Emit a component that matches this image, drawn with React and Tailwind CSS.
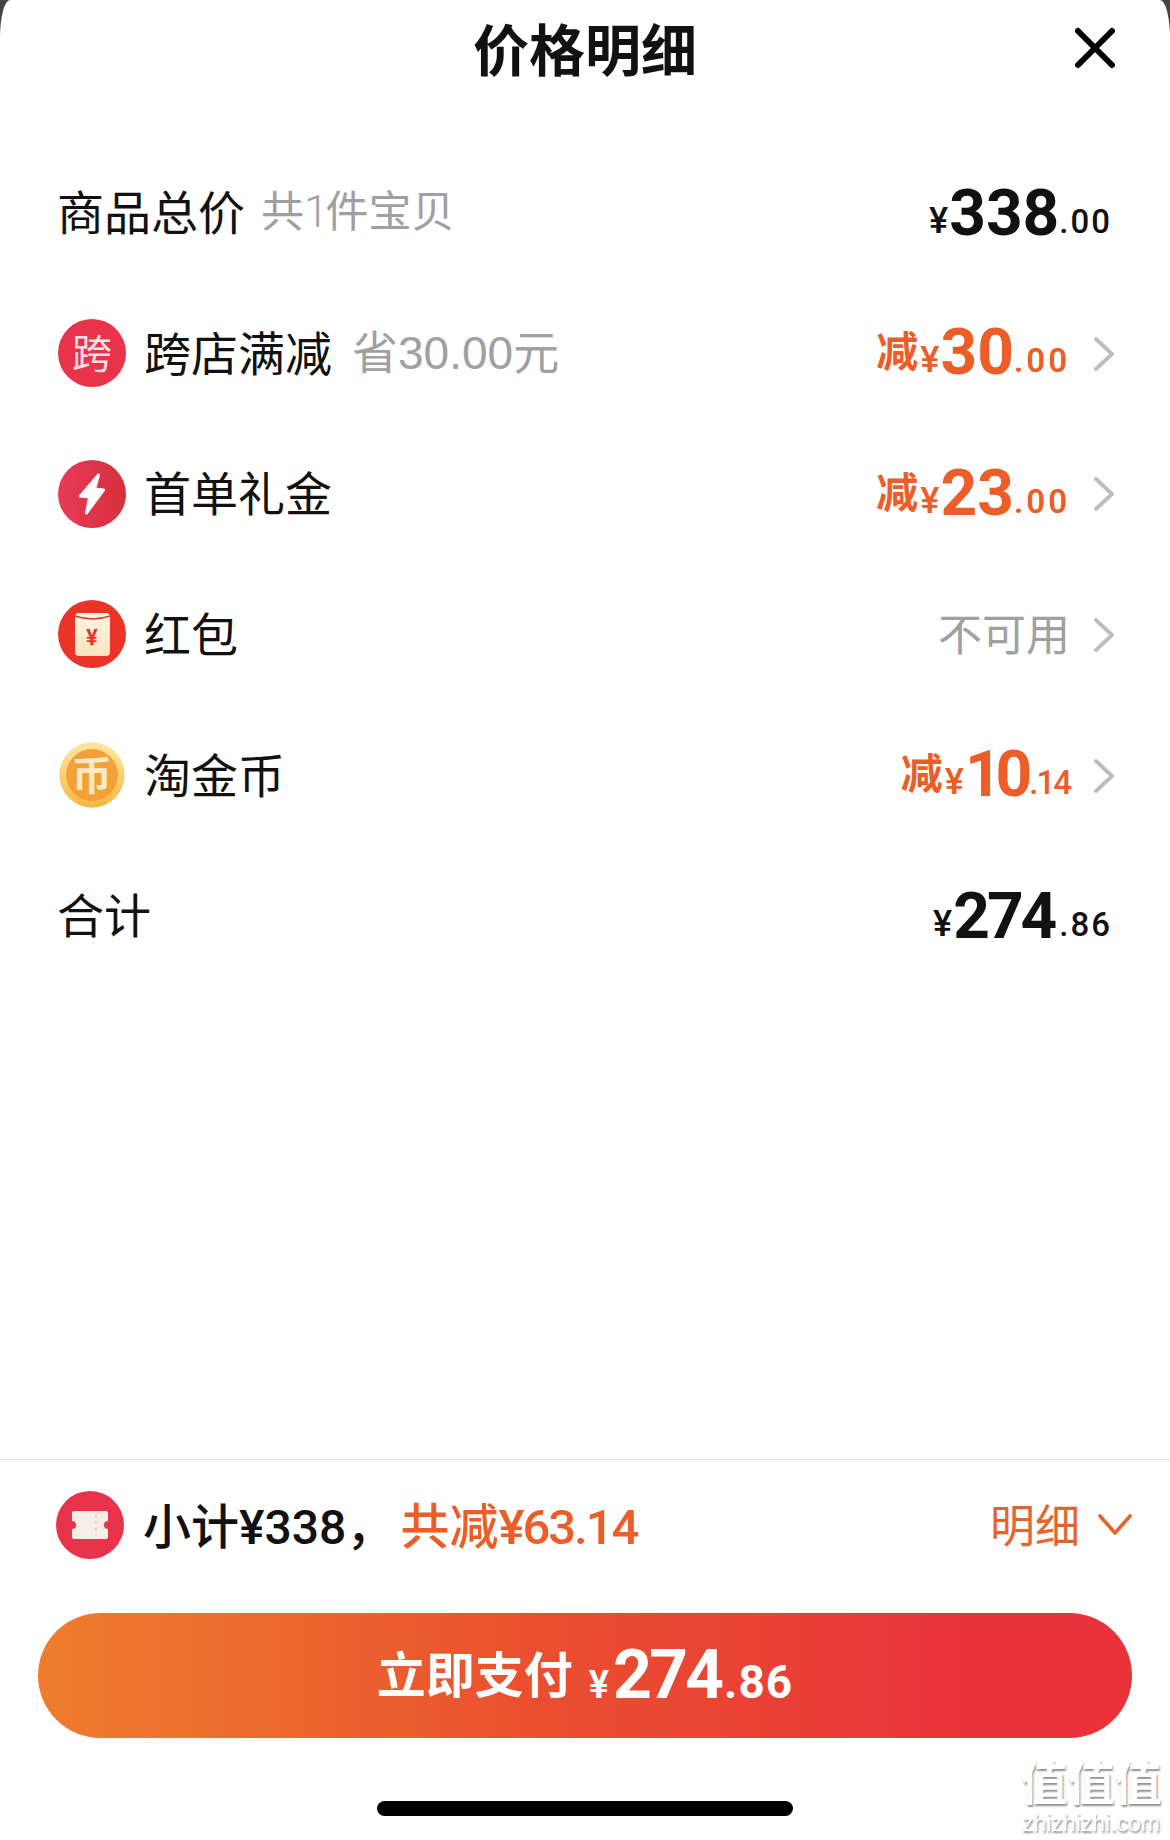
import React from "react";

function Chevron() {
  return (
    <svg width="20" height="34" viewBox="0 0 20 34" fill="none" className="ml-[24px] mt-[1px] shrink-0">
      <path d="M2 2 L18 17 L2 32" stroke="#bdbdbd" strokeWidth="3.8" strokeLinecap="round" strokeLinejoin="round" />
    </svg>
  );
}

function Amount({ prefix, int, dec, color, intClass = "tracking-[0px]", decClass = "tracking-[2px]" }) {
  return (
    <span className={`font-['Roboto',sans-serif] whitespace-nowrap leading-none ${color}`}>
      {prefix && <span className="font-['Noto_Sans_CJK_SC',sans-serif] text-[42px] font-bold align-[5px]">{prefix}</span>}
      <span className="text-[36px] font-medium ml-[2px] mr-[1px]">¥</span>
      <span className={`text-[64px] font-bold align-[-2px] ${intClass}`}>{int}</span>
      <span className={`text-[33px] font-medium ${decClass}`}>{dec}</span>
    </span>
  );
}

function IconCircle({ children, className }) {
  return <div className={`w-[68px] h-[68px] rounded-full flex items-center justify-center shrink-0 ${className}`}>{children}</div>;
}

function Row({ icon, label, sub, right, chevron }) {
  return (
    <div className={`flex items-center h-[140.7px] ${icon ? "pl-[58px]" : "pl-[57px]"} ${chevron ? "pr-[56px]" : "pr-[58px]"}`}>
      {icon && <div className="mr-[18px]">{icon}</div>}
      <span className="text-[47px] leading-none text-[#111] pb-[6px]">{label}</span>
      {sub}
      <div className="ml-auto flex items-center">
        {right}
        {chevron && <Chevron />}
      </div>
    </div>
  );
}

export default function App() {
  return (
    <div className="relative w-[1170px] h-[1840px] bg-[#444444] overflow-hidden font-['Noto_Sans_CJK_SC',sans-serif]">
      <div className="w-full h-full bg-white rounded-tl-[10px_38px] rounded-tr-[10px_38px] flex flex-col">
        <div className="relative h-[100px] shrink-0 flex items-center justify-center">
          <span className="text-[56px] leading-none font-bold text-[#111] pb-[6px]">价格明细</span>
          <svg width="42" height="42" viewBox="0 0 42 42" fill="none" className="absolute left-[1074px] top-[27px]">
            <path d="M4 4 L38 38 M38 4 L4 38" stroke="#000" strokeWidth="6" strokeLinecap="round" />
          </svg>
        </div>
        <div className="h-[42px] shrink-0" />
        <Row
          label="商品总价"
          sub={
            <span className="text-[43px] leading-none text-[#a0a0a0] ml-[16px] pb-[3px] whitespace-nowrap">
              共<span className="font-['Roboto',sans-serif] font-light text-[44px] tracking-[-6px]">1</span>
              <span className="ml-[3px]">件宝贝</span>
            </span>
          }
          right={<Amount int="338" dec=".00" color="text-[#111] pt-[3px]" intClass="tracking-[0px]" />}
        />
        <Row
          icon={
            <IconCircle className="bg-[#e8334a]">
              <span className="text-[40px] leading-none text-[#fbe3e3] pb-[4px]">跨</span>
            </IconCircle>
          }
          label="跨店满减"
          sub={
            <span className="text-[46px] leading-none text-[#a0a0a0] ml-[20px] pb-[4px]">
              省<span className="font-['Liberation_Sans',sans-serif]">30.00</span>元
            </span>
          }
          chevron
          right={<Amount prefix="减" int="30" dec=".00" color="text-[#ec5d28]" decClass="tracking-[3px] font-semibold" />}
        />
        <Row
          icon={
            <IconCircle className="bg-gradient-to-r from-[#e93a58] to-[#d62f3a]">
              <svg width="28" height="44" viewBox="0 0 27 44">
                <path d="M20 3 L2 24 L11 25 L8 41 L25 18 L16 17 Z" fill="#fff" stroke="#fff" strokeWidth="3" strokeLinejoin="round" />
              </svg>
            </IconCircle>
          }
          label="首单礼金"
          chevron
          right={<Amount prefix="减" int="23" dec=".00" color="text-[#ec5d28]" decClass="tracking-[3px] font-semibold" />}
        />
        <Row
          icon={
            <IconCircle className="bg-[#ea3428]">
              <div className="w-[35px] h-[43px] rounded-[4px] bg-gradient-to-b from-[#fff5e2] to-[#fce4c0] flex items-center justify-center relative overflow-hidden">
                <svg width="35" height="10" viewBox="0 0 35 10" className="absolute top-0 left-0">
                  <path d="M0 3 Q17.5 9 35 3" stroke="#ea3428" strokeWidth="1.4" fill="none" />
                </svg>
                <span className="font-['Roboto',sans-serif] text-[22px] leading-none font-bold text-[#e8362c] mt-[7px]">¥</span>
              </div>
            </IconCircle>
          }
          label="红包"
          chevron
          right={<span className="text-[44px] leading-none text-[#a0a0a0] pb-[5px]">不可用</span>}
        />
        <Row
          icon={
            <IconCircle className="bg-gradient-to-b from-[#fbe7a0] to-[#f6b83e] p-[7px] scale-[0.96]">
              <div className="w-full h-full rounded-full bg-[#f1a136] flex items-center justify-center">
                <span className="text-[42px] leading-none font-bold text-[#fde9c8] pb-[4px]">币</span>
              </div>
            </IconCircle>
          }
          label="淘金币"
          chevron
          right={
            <Amount
              prefix="减"
              int="10"
              dec=".14"
              color="text-[#ec5d28]"
              intClass="tracking-[-6px]"
              decClass="tracking-[-2px] font-bold ml-[3px]"
            />
          }
        />
        <Row
          label="合计"
          right={<Amount int="274" dec=".86" color="text-[#111] pt-[2px]" intClass="tracking-[-3px]" decClass="tracking-[2px] ml-[5px]" />}
        />
        <div className="flex-1" />
        <div className="border-t border-[#dedede] h-[134px] mb-[20px] shrink-0 flex items-center pl-[56px] pr-[38px]">
          <IconCircle className="bg-[#e8334a] mb-[4px]">
            <svg width="38" height="30" viewBox="0 0 38 30">
              <path d="M3 1 H35 Q37 1 37 3 V11 A4 4 0 0 0 37 19 V27 Q37 29 35 29 H3 Q1 29 1 27 V19 A4 4 0 0 0 1 11 V3 Q1 1 3 1 Z" fill="#f8eee6" />
              <path d="M25 4 V26" stroke="#e8cfc4" strokeWidth="1.6" strokeDasharray="3 4" />
            </svg>
          </IconCircle>
          <span className="ml-[19px] text-[48px] leading-none font-medium text-[#111] whitespace-nowrap pb-[3px]">
            小计<span className="font-['Roboto',sans-serif]">¥338</span>，
          </span>
          <span className="ml-[6px] text-[49px] leading-none font-medium text-[#ec5d28] whitespace-nowrap pb-[3px]">
            共减<span className="font-['Roboto',sans-serif] tracking-[-2px]">¥63.14</span>
          </span>
          <span className="ml-auto text-[45px] leading-none text-[#e8622d] pb-[6px]">明细</span>
          <svg width="34" height="24" viewBox="0 0 34 24" fill="none" className="ml-[18px] mb-[4px]">
            <path d="M2 3 L17 20 L32 3" stroke="#e8622d" strokeWidth="3.6" strokeLinecap="round" strokeLinejoin="round" />
          </svg>
        </div>
        <div className="px-[38px] shrink-0">
          <div className="h-[125px] rounded-full bg-gradient-to-r from-[#ee7d2e] via-[#ea4f2f] via-45% to-[#e9323a] to-85% flex items-center justify-center text-white">
            <span className="text-[49px] leading-none font-bold mr-[16px] pb-[9px]">立即支付</span>
            <span className="font-['Roboto',sans-serif] whitespace-nowrap leading-none pb-[2px]">
              <span className="text-[38px] font-semibold mr-[4px]">¥</span>
              <span className="text-[68px] font-bold tracking-[-3px]">274</span>
              <span className="text-[46px] font-bold ml-[3px] tracking-[1px]">.86</span>
            </span>
          </div>
        </div>
        <div className="h-[102px] shrink-0 flex items-start justify-center pt-[63px]">
          <div className="w-[416px] h-[15px] rounded-full bg-black" />
        </div>
      </div>
      <div className="absolute left-[1018px] top-[1750px] w-[146px] flex flex-col items-center text-white [text-shadow:1px_2px_2px_#8f8f8f]">
        <span className="text-[47px] leading-[60px] font-bold whitespace-nowrap">值值值</span>
        <span className="font-['Liberation_Sans',sans-serif] text-[23px] leading-[26px] whitespace-nowrap">zhizhizhi.com</span>
      </div>
    </div>
  );
}
